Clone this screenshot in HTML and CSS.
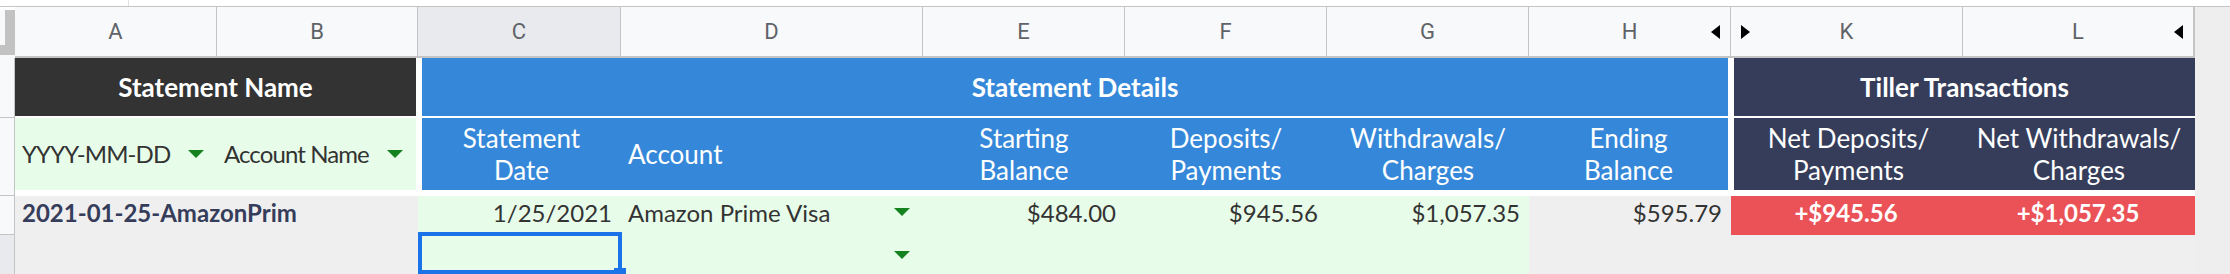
FILE: index.html
```html
<!DOCTYPE html>
<html lang="en">
<head>
    <meta charset="UTF-8">
    <meta name="viewport" content="width=device-width, initial-scale=1.0">
    <title>Statements</title>
    <link rel="stylesheet" href="styles.css">
</head>
<body>
    <div class="sheet">
        <div class="topbar"><div class="topbar-tick"></div></div>
        <div class="gutter"></div>

        <!-- column letters -->
        <div class="corner"><div class="corner-box"></div></div>
        <div class="colhead"><span class="letter">A</span></div>
        <div class="colhead"><span class="letter">B</span></div>
        <div class="colhead selected"><span class="letter">C</span></div>
        <div class="colhead"><span class="letter">D</span></div>
        <div class="colhead"><span class="letter">E</span></div>
        <div class="colhead"><span class="letter">F</span></div>
        <div class="colhead"><span class="letter">G</span></div>
        <div class="colhead"><span class="letter">H</span><i class="tri-left"></i></div>
        <div class="colhead"><i class="tri-right"></i><span class="letter">K</span></div>
        <div class="colhead last"><span class="letter">L</span><i class="tri-left"></i></div>

        <!-- row 1 -->
        <div class="rowhead"></div>
        <div class="cell title dark span-2">Statement Name</div>
        <div class="cell title blue span-6">Statement Details</div>
        <div class="cell title navy span-2">Tiller Transactions</div>

        <!-- row 2 -->
        <div class="rowhead tall"></div>
        <div class="cell head green drop dark-text"><span class="txt">YYYY-MM-DD</span><i class="arrow"></i></div>
        <div class="cell head green drop dark-text gap-right"><span class="txt">Account Name</span><i class="arrow"></i></div>
        <div class="cell head blue gap-left center">Statement<br>Date</div>
        <div class="cell head blue">Account</div>
        <div class="cell head blue center">Starting<br>Balance</div>
        <div class="cell head blue center">Deposits/<br>Payments</div>
        <div class="cell head blue center">Withdrawals/<br>Charges</div>
        <div class="cell head blue center gap-right-sm">Ending<br>Balance</div>
        <div class="cell head navy center gap-left-sm">Net Deposits/<br>Payments</div>
        <div class="cell head navy center">Net Withdrawals/<br>Charges</div>

        <!-- row 3 -->
        <div class="rowhead"></div>
        <div class="cell data gray span-2 name">2021-01-25-AmazonPrim</div>
        <div class="cell data green right">1/25/2021</div>
        <div class="cell data green drop"><span class="txt">Amazon Prime Visa</span><i class="arrow"></i></div>
        <div class="cell data green right">$484.00</div>
        <div class="cell data green right">$945.56</div>
        <div class="cell data green right">$1,057.35</div>
        <div class="cell data gray right">$595.79</div>
        <div class="cell data red center">+$945.56</div>
        <div class="cell data red center">+$1,057.35</div>

        <!-- row 4 -->
        <div class="rowhead selected"></div>
        <div class="cell gray span-2"></div>
        <div class="cell green active"></div>
        <div class="cell green drop"><span class="txt"></span><i class="arrow"></i></div>
        <div class="cell green"></div>
        <div class="cell green"></div>
        <div class="cell green"></div>
        <div class="cell gray"></div>
        <div class="cell gray"></div>
        <div class="cell gray"></div>
    </div>
</body>
</html>
```

FILE: styles.css
```css
body {
    margin: 0;
    background: #fff;
    font-family: "Lato", "Open Sans", sans-serif;
}
.sheet {
    display: grid;
    grid-template-columns: 15px 202px 201px 203px 302px 202px 202px 202px 202px 232px 232px 35px;
    grid-template-rows: 7px 51px 60px 78px 39px 39px;
    width: 2230px;
    height: 274px;
    overflow: hidden;
}
.topbar {
    grid-column: 1 / -1;
    grid-row: 1;
    border-bottom: 1px solid #c4c4c4;
    box-sizing: border-box;
}
.topbar-tick {
    margin-left: 128px;
    width: 1px;
    height: 6px;
    background: #e0e0e0;
}
.gutter {
    grid-column: 12;
    grid-row: 2 / -1;
    background: #eeeeee;
}

/* column + row headers */
.corner {
    margin-top: 3px;
    background: #c2c2c2;
    border-bottom: 3px solid #f8f9fa;
}
.corner-box {
    width: 5px;
    height: 35px;
    background: #f8f9fa;
}
.colhead {
    display: grid;
    grid-template-columns: 1fr auto 1fr;
    align-items: center;
    background: #f8f9fa;
    border-right: 1px solid #c4c4c4;
    border-bottom: 2px solid #c4c4c4;
    font-family: Roboto, "Liberation Sans", sans-serif;
    font-size: 22px;
    color: #5f6368;
}
.colhead .letter {
    grid-column: 2;
    grid-row: 1;
}
.colhead.selected {
    background: #e8eaed;
}
.colhead.last {
    border-right: 2px solid #c4c4c4;
}
.tri-left {
    grid-column: 3;
    grid-row: 1;
    justify-self: end;
    margin-right: 10px;
    border-top: 7px solid transparent;
    border-bottom: 7px solid transparent;
    border-right: 9px solid #000;
}
.tri-right {
    grid-column: 1;
    grid-row: 1;
    justify-self: start;
    margin-left: 10px;
    border-top: 7px solid transparent;
    border-bottom: 7px solid transparent;
    border-left: 9px solid #000;
}
.rowhead {
    background: #f8f9fa;
    border-right: 1px solid #c4c4c4;
    border-bottom: 1px solid #c4c4c4;
}
.rowhead.selected {
    background: #e8eaed;
    border-bottom: none;
}

/* cells */
.cell {
    display: flex;
    align-items: center;
    min-width: 0;
    box-sizing: border-box;
    white-space: nowrap;
    overflow: hidden;
}
.span-2 {
    grid-column: span 2;
}
.span-6 {
    grid-column: span 6;
}
.dark {
    background: #333333;
}
.blue {
    background: #3588d9;
}
.navy {
    background: #353d5b;
}
.green {
    background: #e8fde9;
}
.gray {
    background: #efefef;
}
.red {
    background: #eb5257;
}

.title {
    justify-content: center;
    color: #fff;
    font-size: 26px;
    font-weight: 700;
    border-bottom: 2px solid #fff;
}
.title.dark {
    border-right: 2px solid #fff;
}
.title.blue {
    border-left: 4px solid #fff;
    border-right: 3px solid #fff;
}
.title.navy {
    border-left: 3px solid #fff;
}

.head {
    padding: 0 7px;
    color: #fff;
    font-size: 26px;
    line-height: 32px;
    border-bottom: 6px solid #fff;
}
.head.dark-text {
    color: #333;
    font-size: 24px;
    letter-spacing: -0.9px;
}
.gap-left {
    border-left: 4px solid #fff;
}
.gap-right {
    border-right: 2px solid #fff;
}
.gap-left-sm {
    border-left: 3px solid #fff;
}
.gap-right-sm {
    border-right: 3px solid #fff;
}
.center {
    justify-content: center;
    text-align: center;
}
.right {
    justify-content: flex-end;
}

.data {
    padding: 0 9px 7px 7px;
    font-size: 24px;
    color: #333;
}
.data.name {
    font-weight: 700;
    color: #353d5b;
}
.data.red {
    color: #fff;
    font-weight: 700;
}

/* dropdown chips */
.drop {
    padding-right: 0;
}
.drop .txt {
    flex: 1;
    min-width: 0;
    overflow: hidden;
}
.arrow {
    flex: none;
    margin: 0 13px;
    border-left: 8px solid transparent;
    border-right: 8px solid transparent;
    border-top: 8px solid #14821e;
}

/* selected cell */
.active {
    position: relative;
    overflow: visible;
    margin: -3px -1px 0 0;
    border: 4px solid #1a73e8;
}
.active::after {
    content: "";
    position: absolute;
    right: -8px;
    bottom: -10px;
    width: 12px;
    height: 12px;
    background: #1a73e8;
}
```
